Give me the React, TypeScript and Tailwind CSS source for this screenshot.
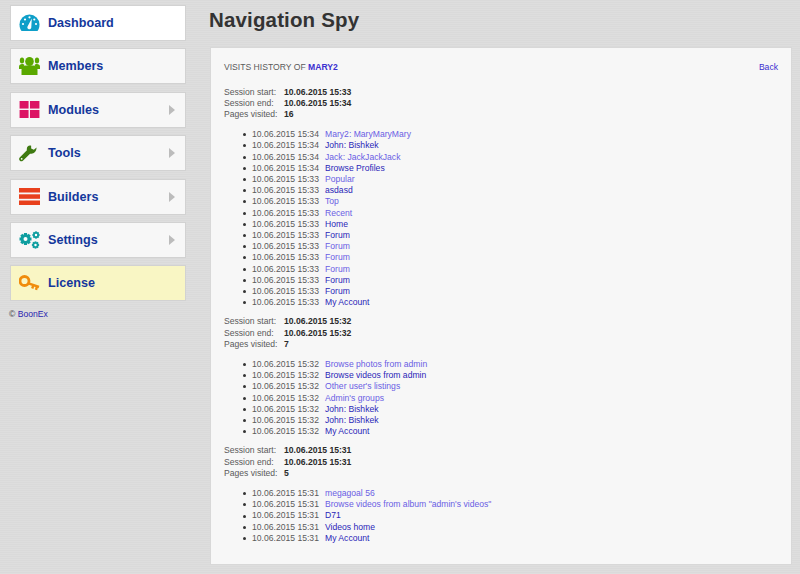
import React from 'react';

const font = 'font-["Liberation_Sans",Arial,sans-serif]';

function DashIcon() {
  return (
    <svg width="21" height="18" viewBox="0 0 20 18">
      <path d="M0 10.500a10 10 0 0 1 20 0c0 2.800-.8 5-2 6.500H2C.8 15.500 0 13.300 0 10.500z" fill="#0e9fc9" />
      <circle cx="3.500" cy="10" r="1.100" fill="#fff" />
      <circle cx="5.500" cy="5.500" r="1.100" fill="#fff" />
      <circle cx="10" cy="3.300" r="1.100" fill="#fff" />
      <circle cx="16.500" cy="10" r="1.100" fill="#fff" />
      <circle cx="14.800" cy="5.500" r="1.100" fill="#fff" />
      <path d="M12.300 4.500 11.800 13a2 2 0 1 1-3.500-1z" fill="#fff" />
    </svg>
  );
}

function MembersIcon() {
  return (
    <svg width="21" height="18" viewBox="0 0 21 18">
      <g fill="#5aa800">
        <ellipse cx="3" cy="3.500" rx="2.200" ry="3" />
        <ellipse cx="18" cy="3.500" rx="2.200" ry="3" />
        <path d="M0 12V9.500C0 8 1.500 7 3 7s2 .5 2.500 1L4 12z" />
        <path d="M21 12V9.500C21 8 19.500 7 18 7s-2 .5-2.500 1L17 12z" />
        <ellipse cx="10.500" cy="4.500" rx="4.300" ry="4.500" />
        <path d="M2.500 18v-5c0-3 2.500-4.500 5-4.500h6c2.500 0 5 1.500 5 4.500v5z" />
      </g>
    </svg>
  );
}

function ModulesIcon() {
  return (
    <svg width="21" height="17" viewBox="0 0 21 18">
      <g fill="#dc1464">
        <rect x="0" y="0" width="9.500" height="8" />
        <rect x="11" y="0" width="10" height="8" />
        <rect x="0" y="9.500" width="9.500" height="8.500" />
        <rect x="11" y="9.500" width="10" height="8.500" />
      </g>
    </svg>
  );
}

function ToolsIcon() {
  return (
    <svg width="18" height="18" viewBox="0 0 20 19">
      <path
        d="M19.500 3.500 16.500 6l-3-1.500L13.500 1.500C10.500.5 8 3 8.800 6.500L.8 14.500c-1.200 1.300-.6 3 .2 3.700.9.800 2.300.8 3.300-.2l8-7.800c3.500 1 7-1.500 7.200-6.700z"
        fill="#3f7a12"
      />
      <circle cx="3" cy="16" r="1" fill="#fff" />
    </svg>
  );
}

function BuildersIcon() {
  return (
    <svg width="21" height="17" viewBox="0 0 21 17">
      <g fill="#e8401c">
        <rect x="0" y="0" width="21" height="4.500" />
        <rect x="0" y="6.300" width="21" height="4.500" />
        <rect x="0" y="12.500" width="21" height="4.500" />
      </g>
    </svg>
  );
}

function Gear({ cx, cy, r }: { cx: number; cy: number; r: number }) {
  const teeth = [0, 45, 90, 135];
  return (
    <g>
      {teeth.map((a) => (
        <rect
          key={a}
          x={cx - r * 0.32}
          y={cy - r * 1.25}
          width={r * 0.64}
          height={r * 2.5}
          fill="#0f9ea0"
          transform={`rotate(${a} ${cx} ${cy})`}
        />
      ))}
      <circle cx={cx} cy={cy} r={r} fill="#0f9ea0" />
      <circle cx={cx} cy={cy} r={r * 0.42} fill="#fff" />
    </g>
  );
}

function SettingsIcon() {
  return (
    <svg width="21" height="18" viewBox="0 0 21 18">
      <Gear cx={6.500} cy={8} r={4.800} />
      <Gear cx={17} cy={4} r={2.900} />
      <Gear cx={16.500} cy={14} r={2.900} />
    </svg>
  );
}

function LicenseIcon() {
  return (
    <svg width="21" height="18" viewBox="0 0 21 18">
      <circle cx="5.500" cy="7" r="4.500" fill="none" stroke="#f08c0c" strokeWidth="2.800" />
      <path d="M9.500 9.300 20 13M14.500 11l-1.300 3.500M18 12.300l-1 3.500" stroke="#f08c0c" strokeWidth="2.400" fill="none" />
    </svg>
  );
}

const menu = [
  { label: 'Dashboard', icon: <DashIcon />, active: true },
  { label: 'Members', icon: <MembersIcon /> },
  { label: 'Modules', icon: <ModulesIcon />, arrow: true },
  { label: 'Tools', icon: <ToolsIcon />, arrow: true },
  { label: 'Builders', icon: <BuildersIcon />, arrow: true },
  { label: 'Settings', icon: <SettingsIcon />, arrow: true },
  { label: 'License', icon: <LicenseIcon />, license: true },
];

type Visit = [string, string, boolean];

const sessions: { start: string; end: string; pages: number; visits: Visit[] }[] = [
  {
    start: '10.06.2015 15:33',
    end: '10.06.2015 15:34',
    pages: 16,
    visits: [
      ['15:34', 'Mary2: MaryMaryMary', true],
      ['15:34', 'John: Bishkek', false],
      ['15:34', 'Jack: JackJackJack', true],
      ['15:34', 'Browse Profiles', false],
      ['15:33', 'Popular', true],
      ['15:33', 'asdasd', false],
      ['15:33', 'Top', true],
      ['15:33', 'Recent', true],
      ['15:33', 'Home', false],
      ['15:33', 'Forum', false],
      ['15:33', 'Forum', true],
      ['15:33', 'Forum', true],
      ['15:33', 'Forum', true],
      ['15:33', 'Forum', false],
      ['15:33', 'Forum', false],
      ['15:33', 'My Account', false],
    ],
  },
  {
    start: '10.06.2015 15:32',
    end: '10.06.2015 15:32',
    pages: 7,
    visits: [
      ['15:32', 'Browse photos from admin', true],
      ['15:32', 'Browse videos from admin', false],
      ['15:32', "Other user's listings", true],
      ['15:32', "Admin's groups", true],
      ['15:32', 'John: Bishkek', false],
      ['15:32', 'John: Bishkek', false],
      ['15:32', 'My Account', false],
    ],
  },
  {
    start: '10.06.2015 15:31',
    end: '10.06.2015 15:31',
    pages: 5,
    visits: [
      ['15:31', 'megagoal 56', true],
      ['15:31', 'Browse videos from album "admin\'s videos"', true],
      ['15:31', 'D71', false],
      ['15:31', 'Videos home', false],
      ['15:31', 'My Account', false],
    ],
  },
];

export default function App() {
  return (
    <div className={`${font} h-[574px] overflow-hidden flex bg-[#dcdcdc] bg-[repeating-linear-gradient(0deg,#dedede_0,#dedede_1px,#dadada_1px,#dadada_2px)]`}>
      {/* Sidebar */}
      <div className="w-[176px] ml-[10px] mt-[5px] shrink-0">
        <div className="flex flex-col gap-[7.4px]">
          {menu.map((m) => (
            <div
              key={m.label}
              className={`h-[36px] flex items-center pl-[8px] pr-[10px] border border-[#d2d2d2] ${
                m.active ? 'bg-white' : m.license ? 'bg-[#f9f6c4]' : 'bg-[#f7f7f7]'
              }`}
            >
              <div className="w-[29px] shrink-0 flex items-center">{m.icon}</div>
              <span className="pt-px text-[12.6px] font-bold text-[#14379c] flex-1">{m.label}</span>
              {m.arrow && (
                <div className="w-0 h-0 border-y-[5.500px] border-y-transparent border-l-[6px] border-l-[#bcbcbc]" />
              )}
            </div>
          ))}
        </div>
        <div className="mt-[8px] -ml-px text-[8.6px] leading-[11px] text-[#444]">
          © <span className="text-[#2a1fb0]">BoonEx</span>
        </div>
      </div>

      {/* Content */}
      <div className="ml-[24px] w-[582px] shrink-0">
        <h1 className="h-[47px] pt-[7px] -ml-px text-[20.5px] leading-[26px] font-bold text-[#333] tracking-[0.15px]">
          Navigation Spy
        </h1>
        <div className="h-[518px] bg-[#f7f7f7] border border-[#d8d8d8] pl-[13px] pr-[13px] pt-[14px] text-[8.6px] leading-[11.2px] text-[#5a5a5a]">
          <div className="flex justify-between h-[11px]">
            <div>
              VISITS HISTORY OF <span className="font-bold text-[#3b2fd0]">MARY2</span>
            </div>
            <span className="text-[#3b2fd0]">Back</span>
          </div>
          <div className="mt-[13.5px] flex flex-col gap-[8px]">
            {sessions.map((s) => (
              <div key={s.start}>
                <div className="grid grid-cols-[60px_1fr]">
                  <span>Session start:</span>
                  <b className="text-[#2a2a2a]">{s.start}</b>
                  <span>Session end:</span>
                  <b className="text-[#2a2a2a]">{s.end}</b>
                  <span>Pages visited:</span>
                  <b className="text-[#2a2a2a]">{s.pages}</b>
                </div>
                <ul className="mt-[9px] ml-[19px]">
                  {s.visits.map((v, i) => (
                    <li key={i} className="flex items-center">
                      <span className="w-[3px] h-[3px] rounded-full bg-[#333] mr-[6px]" />
                      <span className="w-[73px] shrink-0">10.06.2015 {v[0]}</span>
                      <span className={v[2] ? 'text-[#6a5ee4]' : 'text-[#2a1fb8]'}>{v[1]}</span>
                    </li>
                  ))}
                </ul>
              </div>
            ))}
          </div>
        </div>
      </div>
    </div>
  );
}
